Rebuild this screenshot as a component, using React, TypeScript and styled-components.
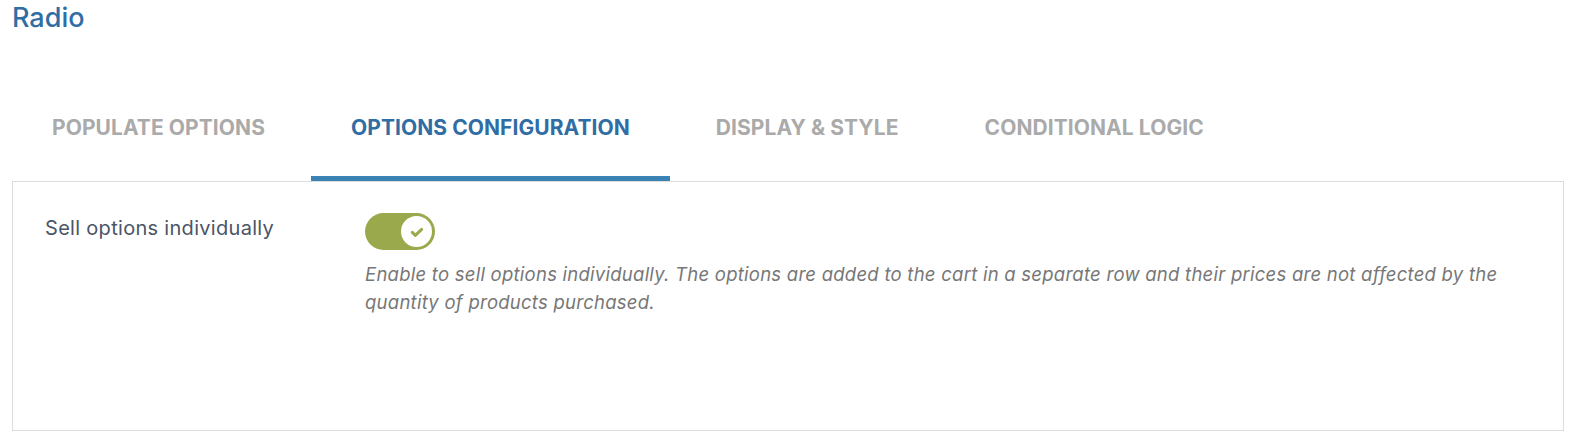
import React, { useState } from 'react';
import styled, { createGlobalStyle } from 'styled-components';

const GlobalStyle = createGlobalStyle`
  html, body {
    margin: 0;
    padding: 0;
    background: #fff;
    font-family: Inter, "Noto Sans", "Liberation Sans", sans-serif;
  }
`;

const Page = styled.div`
  padding: 2px 14px 0 12px;
`;

const Title = styled.h2`
  margin: 0;
  font-size: 27px;
  font-weight: 500;
  color: #2f6da4;
  line-height: 32px;
`;

const TabBar = styled.div`
  display: flex;
  gap: 6px;
  margin-top: 66px;
`;

const Tab = styled.button<{ $active?: boolean }>`
  border: none;
  background: none;
  padding: 15px 40px 35px;
  font-family: inherit;
  font-size: 21px;
  line-height: 26px;
  font-weight: 700;
  letter-spacing: 0.07px;
  text-transform: uppercase;
  color: ${(p) => (p.$active ? '#2f6da4' : '#aaaaaa')};
  border-bottom: 5px solid ${(p) => (p.$active ? '#3b82b5' : 'transparent')};
  cursor: pointer;
`;

const Panel = styled.div`
  border: 1px solid #dddddd;
  height: 250px;
  box-sizing: border-box;
  padding: 31px 32px;
`;

const Row = styled.div`
  display: grid;
  grid-template-columns: 320px 1fr;
`;

const Label = styled.div`
  font-size: 20px;
  color: #4a5568;
  line-height: 28px;
  letter-spacing: 0.3px;
  padding-top: 1px;
`;

const Field = styled.div`
  display: flex;
  flex-direction: column;
  gap: 10px;
`;

const Switch = styled.button<{ $on: boolean }>`
  position: relative;
  width: 70px;
  height: 37px;
  border-radius: 19px;
  border: none;
  padding: 0;
  background: ${(p) => (p.$on ? '#9aa94b' : '#cccccc')};
  cursor: pointer;
`;

const Knob = styled.span<{ $on: boolean }>`
  position: absolute;
  top: 3px;
  left: ${(p) => (p.$on ? '36px' : '3px')};
  width: 31px;
  height: 31px;
  border-radius: 50%;
  background: #fff;
  display: flex;
  align-items: center;
  justify-content: center;
`;

const Help = styled.p`
  margin: 0;
  font-size: 18.5px;
  font-style: italic;
  color: #777777;
  line-height: 28px;
  letter-spacing: 0.25px;
`;

const tabs = ['Populate options', 'Options configuration', 'Display & style', 'Conditional logic'];

export default function App() {
  const [on, setOn] = useState(true);
  return (
    <Page>
      <GlobalStyle />
      <Title>Radio</Title>
      <TabBar>
        {tabs.map((t, i) => (
          <Tab key={t} $active={i === 1}>
            {t}
          </Tab>
        ))}
      </TabBar>
      <Panel>
        <Row>
          <Label>Sell options individually</Label>
          <Field>
            <Switch $on={on} onClick={() => setOn(!on)}>
              <Knob $on={on}>
                <svg width="16" height="16" viewBox="0 0 24 24" fill="none">
                  <path d="M5 12.5l4.5 4.5L19 8" stroke="#9aa94b" strokeWidth="4.5" strokeLinecap="round" strokeLinejoin="round" />
                </svg>
              </Knob>
            </Switch>
            <Help>
              Enable to sell options individually. The options are added to the cart in a separate row and their
              prices are not affected by the quantity of products purchased.
            </Help>
          </Field>
        </Row>
      </Panel>
    </Page>
  );
}
